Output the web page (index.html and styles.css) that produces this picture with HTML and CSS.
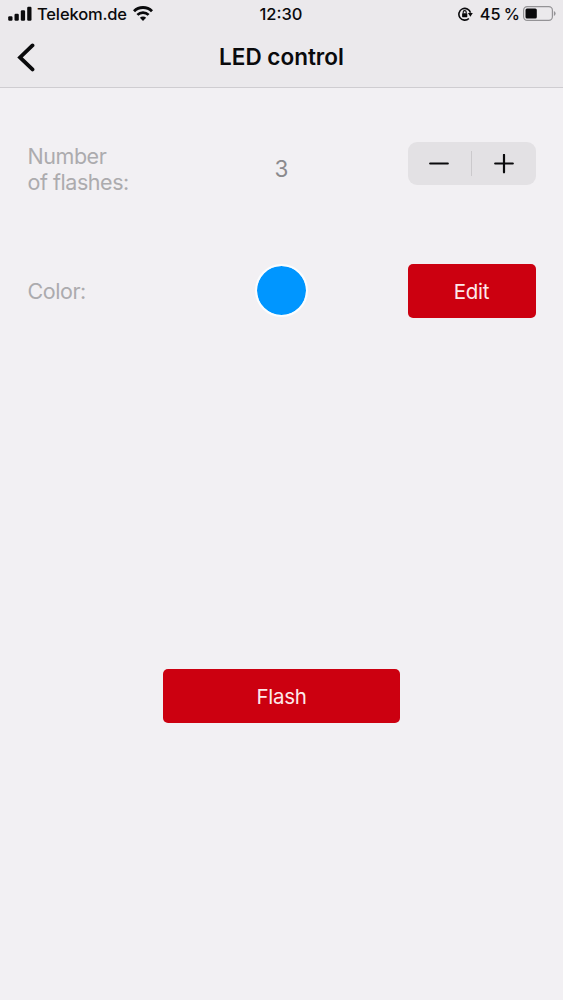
FILE: index.html
```html
<!DOCTYPE html>
<html lang="en">
<head>
    <meta charset="UTF-8">
    <meta name="viewport" content="width=device-width, initial-scale=1.0">
    <title>LED control</title>
    <link rel="stylesheet" href="styles.css">
</head>
<body>
    <header class="header">
        <div class="status-bar">
            <div class="status-left">
                <svg class="signal" width="24" height="15" viewBox="0 0 24 15">
                    <rect x="0.2" y="10.2" width="4.3" height="4.5" rx="1.2"/>
                    <rect x="6.5" y="7.7" width="4.3" height="7" rx="1.2"/>
                    <rect x="12.8" y="4.2" width="4.3" height="10.5" rx="1.2"/>
                    <rect x="19.2" y="0.7" width="4.3" height="14" rx="1.2"/>
                </svg>
                <span class="carrier">Telekom.de</span>
                <svg class="wifi" width="20" height="15" viewBox="0 0 20 15">
                    <path d="M1 5.3 A12.7 12.7 0 0 1 19 5.3" fill="none" stroke="#0a0a0c" stroke-width="2.9"/>
                    <path d="M4.4 8.9 A7.9 7.9 0 0 1 15.6 8.9" fill="none" stroke="#0a0a0c" stroke-width="2.7"/>
                    <path d="M10 15 L6.9 11.8 A4.4 4.4 0 0 1 13.1 11.8 Z"/>
                </svg>
            </div>
            <div class="time">12:30</div>
            <div class="status-right">
                <svg class="lock" width="15" height="14" viewBox="0 0 15 14">
                    <path d="M10.9 11.5 A5.9 5.9 0 1 1 12.5 5.8" fill="none" stroke="#0a0a0c" stroke-width="1.6"/>
                    <path d="M9.9 6 H14.8 L12.4 9.7 Z"/>
                    <rect x="4.1" y="6.2" width="5.2" height="4" rx="0.6"/>
                    <path d="M5.2 6.5 V5.1 A1.5 1.5 0 0 1 8.2 5.1 V6.5" fill="none" stroke="#0a0a0c" stroke-width="1.1"/>
                </svg>
                <span class="percent">45 %</span>
                <svg class="battery" width="33" height="15" viewBox="0 0 33 15">
                    <rect x="0.6" y="0.6" width="28.8" height="13.8" rx="3.6" fill="none" stroke="#949396" stroke-width="1.2"/>
                    <rect x="2.5" y="2.5" width="11.3" height="10" rx="1.5"/>
                    <path d="M30.9 5 Q32.6 5.8 32.6 7.5 Q32.6 9.2 30.9 10 Z" fill="#949396"/>
                </svg>
            </div>
        </div>
        <div class="nav-bar">
            <svg class="back" width="20" height="30" viewBox="0 0 20 30">
                <path d="M16.5 3.4 L4 15.4 L16.5 27.4" fill="none" stroke="#0a0a0c" stroke-width="3.8" stroke-linecap="round" stroke-linejoin="miter"/>
            </svg>
            <h1>LED control</h1>
        </div>
    </header>

    <main>
        <div class="row flashes">
            <div class="label">Number<br>of flashes:</div>
            <div class="value">3</div>
            <div class="stepper">
                <button aria-label="Decrease">
                    <svg width="20" height="20" viewBox="0 0 20 20">
                        <path d="M1.2 9.5 H18.8" stroke="#0a0a0c" stroke-width="2.2" stroke-linecap="round"/>
                    </svg>
                </button>
                <span class="divider"></span>
                <button aria-label="Increase">
                    <svg width="20" height="20" viewBox="0 0 20 20">
                        <path d="M1.2 9.5 H18.8 M10 0.9 V18.3" stroke="#0a0a0c" stroke-width="2.2" stroke-linecap="round"/>
                    </svg>
                </button>
            </div>
        </div>

        <div class="row color">
            <div class="label">Color:</div>
            <div class="swatch"></div>
            <button class="btn">Edit</button>
        </div>

        <button class="btn btn-flash">Flash</button>
    </main>
</body>
</html>
```
FILE: styles.css
```css
* {
    box-sizing: border-box;
}
body {
    margin: 0;
    min-height: 1000px;
    background-color: #f2f0f3;
    color: #0a0a0c;
    font-family: Inter, "Liberation Sans", sans-serif;
}
button {
    border: none;
    padding: 0;
    font-family: inherit;
}
svg {
    display: block;
    fill: #0a0a0c;
}
.header {
    height: 88px;
    background-color: #ebe9ec;
    border-bottom: 1px solid #cfcdd1;
}
.status-bar {
    display: grid;
    grid-template-columns: 1fr auto 1fr;
    align-items: center;
    height: 27px;
    padding: 0 8px;
    font-size: 16.5px;
    font-weight: 500;
    line-height: 20px;
}
.status-left,
.status-right {
    display: flex;
    align-items: center;
}
.status-right {
    justify-content: flex-end;
    margin-right: -1px;
}
.carrier {
    margin: 0 6px 0 5px;
    letter-spacing: -0.15px;
}
.time {
    padding-right: 1px;
}
.lock {
    margin-right: 7px;
}
.percent {
    margin-right: 3px;
    font-size: 16.3px;
    word-spacing: -1px;
}
.nav-bar {
    display: grid;
    grid-template-columns: 1fr auto 1fr;
    align-items: center;
    height: 60px;
    padding: 0 16px;
}
h1 {
    margin: 0;
    font-size: 22.5px;
    font-weight: 600;
    line-height: 28px;
}
main {
    display: flex;
    flex-direction: column;
    padding: 54px 27.5px 0;
}
.row {
    display: grid;
    grid-template-columns: 1fr auto 1fr;
    align-items: center;
}
.row > :last-child {
    justify-self: end;
}
.label {
    color: #acabae;
    font-size: 21.5px;
    letter-spacing: -0.45px;
    line-height: 26px;
}
.value {
    color: #8b8a8d;
    font-size: 22.5px;
    line-height: 30px;
}
.flashes {
    height: 54px;
}
.stepper {
    display: flex;
    align-items: center;
    align-self: start;
    width: 128px;
    height: 43px;
    border-radius: 9px;
    background-color: #e3e1e4;
}
.stepper button {
    display: flex;
    flex: 1;
    align-items: center;
    justify-content: center;
    height: 100%;
    background: none;
}
.divider {
    width: 1px;
    height: 25px;
    background-color: #cbc9cc;
}
.color {
    height: 54px;
    margin-top: 68px;
}
.swatch {
    width: 53px;
    height: 53px;
    margin-bottom: 1px;
    border: 2px solid #fafdff;
    border-radius: 50%;
    background-color: #0096ff;
    background-clip: padding-box;
}
.btn {
    width: 128px;
    height: 54px;
    border-radius: 5px;
    background-color: #cc0010;
    color: #fde9ea;
    font-size: 20.5px;
    letter-spacing: -0.3px;
}
.btn-flash {
    align-self: center;
    width: 237px;
    margin-top: 351px;
}
```
